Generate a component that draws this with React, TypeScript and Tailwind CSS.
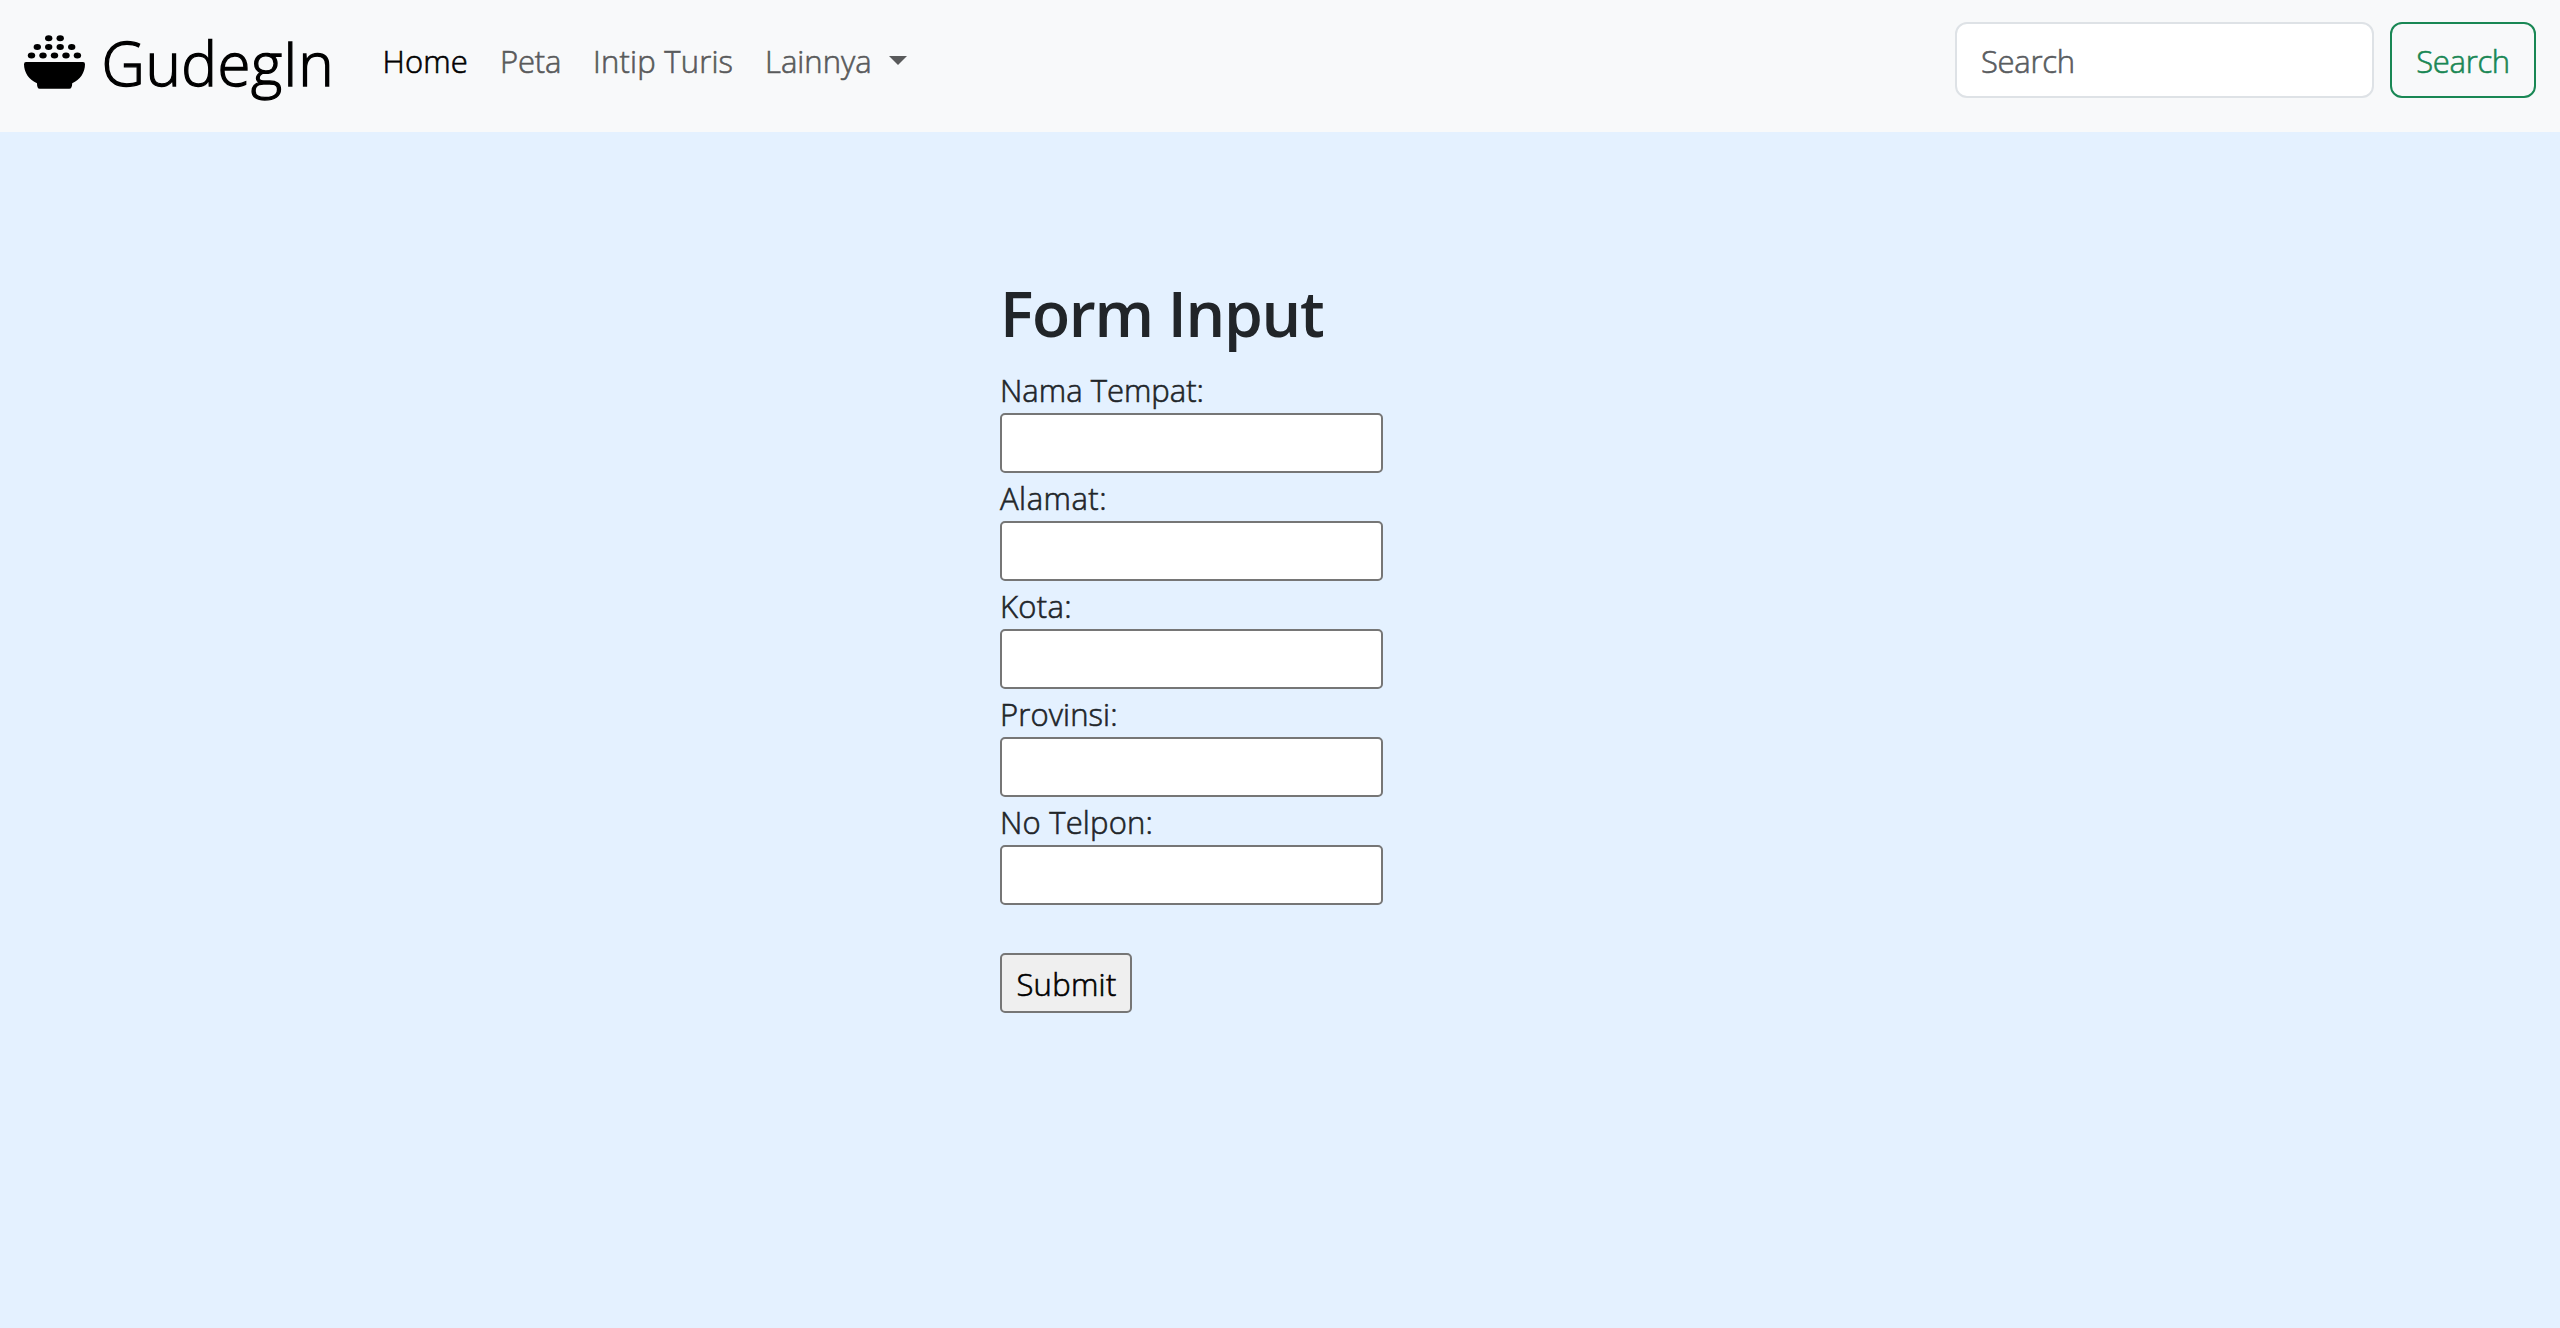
const fields = [
  { label: 'Nama Tempat:', tracking: 'tracking-[0px]' },
  { label: 'Alamat:', tracking: 'tracking-[0.5px]' },
  { label: 'Kota:', tracking: 'tracking-[0.3px]' },
  { label: 'Provinsi:', tracking: 'tracking-[0.1px]' },
  { label: 'No Telpon:', tracking: 'tracking-[0.2px]' },
];

function BowlIcon() {
  const rows = [
    { y: 38.2, xs: [48.7, 60.2] },
    { y: 46.9, xs: [37.3, 48.7, 60.2, 71.7] },
    { y: 55.4, xs: [31.5, 43, 54.5, 66, 77.4] },
  ];
  return (
    <svg className="block h-[60px] w-[64px] shrink-0" viewBox="22 32 64 60" aria-hidden="true">
      {rows.map((row) =>
        row.xs.map((x) => <ellipse key={`${x}-${row.y}`} cx={x} cy={row.y} rx={3.7} ry={3} />),
      )}
      <path d="M26 62H83Q85 62 85 64.2C85 72.5 80 80 72.2 83.2C72.2 86.5 71.3 88.8 69.3 88.8H39.7C37.7 88.8 37 86.5 37 83.2C29.2 80 24 72.5 24 64.2Q24 62 26 62Z" />
    </svg>
  );
}

export default function App() {
  return (
    <div className="min-h-[1328px] bg-[#e4f1ff] font-['Open_Sans','Noto_Sans',sans-serif] text-[31px] leading-[48px] font-light text-[#212529] [-webkit-text-stroke-width:0.6px]">
      <nav className="flex h-[132px] items-start bg-[#f8f9fa] pr-6 pl-[22px]">
        <a className="flex items-start text-black">
          <span className="mt-8">
            <BowlIcon />
          </span>
          <span className="mt-[18px] ml-[15.5px] w-[232px] text-[60px] leading-[90px] tracking-[0.5px] [-webkit-text-stroke-width:1.3px]">
            GudegIn
          </span>
        </a>
        <ul className="mt-[37px] ml-[49px] flex whitespace-nowrap text-[#595a5b]">
          <li className="w-[117.5px] tracking-[0.1px] text-black">Home</li>
          <li className="w-[93px] tracking-[-0.2px]">Peta</li>
          <li className="w-[172px] tracking-[0.2px]">Intip Turis</li>
          <li className="flex">
            <span className="w-[123.5px]">Lainnya</span>
            <span className="mt-[19px] h-0 w-0 border-x-[9.6px] border-t-[9.6px] border-x-transparent border-t-[#595a5b]" />
          </li>
        </ul>
        <form className="mt-[22px] ml-auto flex gap-4">
          <input
            className="h-[76px] w-[419px] rounded-xl border-2 border-[#dee2e6] bg-white px-6 pt-0.5 tracking-[-0.3px] placeholder:text-[#595c5f]"
            placeholder="Search"
          />
          <button
            type="button"
            className="h-[76px] w-[146px] rounded-xl border-2 border-[#198754] pt-px tracking-[-0.3px] text-[#198754]"
          >
            Search
          </button>
        </form>
      </nav>
      <main className="ml-[1000px] flex w-[383px] flex-col items-start pt-[142px]">
        <h2 className="text-[62.5px] leading-[77px] font-semibold tracking-[-1.3px] whitespace-nowrap [-webkit-text-stroke-width:0px]">
          Form Input
        </h2>
        <form className="mt-[14px] flex flex-col items-start">
          {fields.map(({ label, tracking }) => (
            <label key={label} className="flex h-[108px] flex-col">
              <span className={`h-12 pt-px ${tracking}`}>{label}</span>
              <input className="h-[60px] w-[383px] rounded-[5px] border-2 border-[#767676] bg-white px-1" />
            </label>
          ))}
          <button
            type="button"
            className="mt-12 h-[60px] w-[132px] rounded-[5px] border-2 border-[#767676] bg-[#efefef] pt-px pl-px tracking-[0.3px] text-black"
          >
            Submit
          </button>
        </form>
      </main>
    </div>
  );
}
